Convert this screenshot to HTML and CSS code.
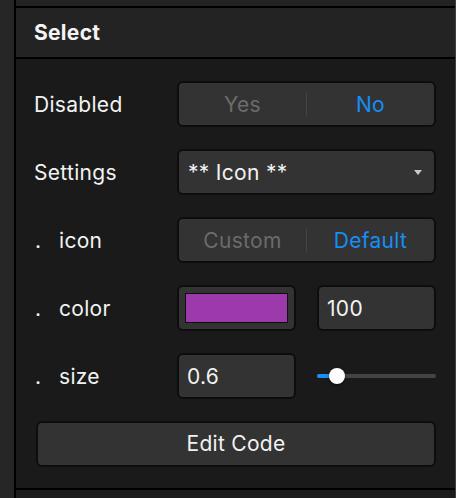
FILE: index.html
```html
<!DOCTYPE html>
<html>
<head>
<meta charset="utf-8">
<link rel="stylesheet" href="styles.css">
</head>
<body>
<div class="frame">
  <div class="side"></div>
  <div class="panel">
    <div class="topbar"></div>
    <div class="header">Select</div>
    <div class="content">
      <div class="row">
        <div class="label">Disabled</div>
        <div class="control seg">
          <span class="opt off">Yes</span>
          <span class="div"></span>
          <span class="opt on">No</span>
        </div>
      </div>
      <div class="row">
        <div class="label">Settings</div>
        <div class="control select">
          <span class="val">** Icon **</span>
          <span class="caret"></span>
        </div>
      </div>
      <div class="row">
        <div class="label"><span class="dot">.</span>icon</div>
        <div class="control seg">
          <span class="opt off">Custom</span>
          <span class="div"></span>
          <span class="opt on">Default</span>
        </div>
      </div>
      <div class="row">
        <div class="label"><span class="dot">.</span>color</div>
        <div class="pair">
          <div class="control half swatch"><div class="chip"></div></div>
          <div class="control half input">100</div>
        </div>
      </div>
      <div class="row">
        <div class="label"><span class="dot">.</span>size</div>
        <div class="pair">
          <div class="control half input">0.6</div>
          <div class="slider">
            <div class="track"><div class="fill"></div><div class="thumb"></div></div>
          </div>
        </div>
      </div>
      <div class="control button">Edit Code</div>
    </div>
    <div class="bottom"></div>
  </div>
  <div class="scroll"></div>
</div>
</body>
</html>
```

FILE: styles.css
```css
* { box-sizing: border-box; }
html, body { margin: 0; padding: 0; height: 100%; }
body {
  background: #1c1c1c;
  font-family: Inter, "Liberation Sans", sans-serif;
  color: #f2f2f2;
  font-size: 21px;
  letter-spacing: 0.3px;
}
.frame { display: flex; height: 498px; overflow: hidden; }
.side { background: #262626; border-right: 2px solid #000; flex: none; width: 16px; }
.panel { flex: 1; display: flex; flex-direction: column; background: #1a1a1a; }
.scroll { width: 2px; background: #404040; flex: none; }
.topbar { height: 8px; background: #232323; border-bottom: 2px solid #000; flex: none; }
.header {
  height: 51px; background: #232323; border-bottom: 2px solid #000;
  padding-left: 18px; display: flex; align-items: center;
  font-weight: 700; font-size: 21px; color: #f4f4f4; flex: none;
  padding-bottom: 1px;
}
.content {
  padding: 22px 19px 21px 18px;
  display: flex; flex-direction: column; gap: 22px;
  border-bottom: 2px solid #000;
  flex: none;
}
.row { display: flex; align-items: center; height: 46px; }
.label { width: 143px; flex: none; display: flex; }
.dot { width: 25px; padding-left: 1px; }
.control {
  height: 46px; background: #333; border: 2px solid #0d0d0d; border-radius: 6px;
}
.row > .control { flex: 1; }
.seg { display: flex; align-items: center; }
.opt { flex: 1; text-align: center; }
.off { color: #6b6b6b; }
.on { color: #168ef7; }
.div { width: 1px; height: 23px; background: #454545; }
.select { display: flex; align-items: center; justify-content: space-between; padding: 0 12px 0 9px; }
.caret {
  width: 0; height: 0; border-left: 4px solid transparent; border-right: 4px solid transparent;
  border-top: 5px solid #c8c8c8;
}
.pair { flex: 1; display: flex; gap: 21px; align-items: center; }
.half { width: 119px; flex: none; }
.swatch { padding: 6px; }
.chip { width: 100%; height: 100%; background: #9d3aab; border: 1px solid #0d0d0d; }
.input { display: flex; align-items: center; padding-left: 8px; }
.slider { flex: 1; display: flex; align-items: center; }
.track { position: relative; width: 100%; height: 4px; border-radius: 2px; background: #444; }
.fill { width: 20px; height: 4px; border-radius: 2px; background: #168ef7; }
.thumb {
  position: absolute; left: 12px; top: -6px; width: 16px; height: 16px; border-radius: 50%;
  background: #fff; box-shadow: 0 1px 3px rgba(0,0,0,0.6);
}
.button { margin-left: 2px; display: flex; align-items: center; justify-content: center; padding-bottom: 1px; }
.bottom { flex: 1; background: #1c1c1c; }
```
